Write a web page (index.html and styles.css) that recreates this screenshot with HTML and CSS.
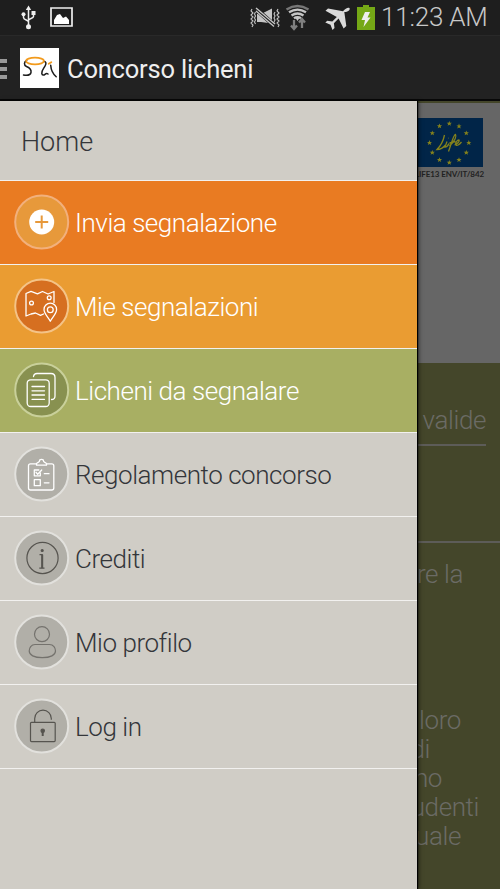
FILE: index.html
```html
<!DOCTYPE html>
<html lang="it">
<head>
<meta charset="utf-8">
<title>Concorso licheni</title>
<link rel="stylesheet" href="styles.css">
</head>
<body>
<div class="screen">
  <header class="status">
    <svg class="status-left" width="60" height="30" viewBox="0 0 60 30" fill="none" stroke="#eee" stroke-width="1.5">
      <path d="M8.5 8v18M8.5 22c0-2-5-2-5-4.500V14M8.500 20.500c0-2 5-2 5-4V13"/>
      <path d="M5.800 10L8.500 5.500 11.200 10z" fill="#eee" stroke="none"/>
      <circle cx="8.500" cy="26.800" r="2.500" fill="#eee" stroke="none"/><circle cx="3.500" cy="14.300" r="2" fill="#eee" stroke="none"/>
      <path d="M11.500 11h4v4h-4z" fill="#eee" stroke="none"/>
      <path d="M31 8h21v18H31z" stroke-width="1.700"/>
      <path d="M34 24v-4l3-5 3-1 3 4 3-1.500 3 3.500v4z" fill="#fff" stroke="none"/>
    </svg>
    <svg class="status-right" width="128" height="32" viewBox="250 0 128 32" fill="none" stroke="#c5c5c5" stroke-width="1.500">
      <path d="M252 9l-1 2 2 2-2 2 2 2-2 2 2 2-2 2 2 2-1 2M278 9l-1 2 2 2-2 2 2 2-2 2 2 2-2 2 2 2-1 2M255.500 12l-1 2 1 2-1 2 1 2-1 2 1 2M275 12l-1 2 1 2-1 2 1 2-1 2 1 2" stroke-width="1.100"/>
      <path d="M257 14h4l11-5.500v15L261 22h-4z" fill="#c5c5c5" stroke="none"/>
      <path d="M256 9l19 17" stroke="#202020" stroke-width="5"/><path d="M256 8l19 16M256 11l18 15.500" stroke-width="1.400"/>
      <path d="M286.500 9.500q11-7 22 0" stroke="#777" stroke-width="2.500"/>
      <path d="M289 12.300q8.500-5.500 17 0M291.500 15.500q6-4 12 0M294 18.300q3.500-2.500 7 0" stroke-width="2.300"/>
      <path d="M295.500 18h4l-2 3z" fill="#c5c5c5" stroke="none"/>
      <path d="M294 20v8M291 25.500l3 3.500 3-3.500M302 28v-8M299 22.500l3-3.500 3 3.500" stroke="#808080" stroke-width="2.300"/>
      <path d="M349.500 8c-2-.8-4 .5-6.500 3.200L328 8.500l-2.500 2.300 11.300 6.200-4.500 4.500-5-.8-2 1.800 5.200 2.300 2 5.200 2-2-.6-4.800 4.700-4.600 5 10 2.700-2.500-2-14C348 12 350.500 10 349.500 8z" fill="#dadada" stroke="none"/>
      <path d="M357 7h6V5h6v2h6v23h-18z" fill="#75a816" stroke="none"/>
      <path d="M365 12h5l-2.500 5.500h3L363.500 27l1.500-7h-3.500z" fill="#eee" stroke="none"/>
    </svg>
    <span class="clock">11:23 AM</span>
  </header>
  <div class="actionbar">
    <div class="bars"><i></i><i></i><i></i></div>
    <svg class="logo" width="39" height="40" viewBox="0 0 39 40" fill="none" stroke="#1c1c1c" stroke-width="1.500" stroke-linecap="round">
      <path d="M6.700 12.500C4 14 3.500 17 6.500 18.500c3 1.300 5 3.500 4.500 6-.5 2.500-3 3.200-7.500 2.500"/>
      <path d="M23.500 13.300c2.500 0 3 2 1.800 4.200-1.500 3-4 5-3.500 8 .4 2 2 1.800 3.200.8 1-.8 2-1 3-.3"/>
      <path d="M30.700 17.300c.3 4.500 2 8.500 5.500 11.500" />
      <ellipse cx="15" cy="13" rx="9" ry="3.300" stroke="#f29a1c" stroke-width="1.700"/><path d="M28.700 15.800l2.600-1.600" stroke="#f29a1c" stroke-width="1.800"/>
    </svg>
    <h1>Concorso licheni</h1>
  </div>
  <div class="body">
    <nav class="drawer">
      <a class="row home">Home</a>
      <a class="row orange"><svg class="icon" viewBox="0 0 56 56"><circle class="disc" cx="27.700" cy="28" r="26.500" fill="#e7993b" stroke="#f2b07c"/><circle cx="27.700" cy="28" r="12.500" fill="#fff"/><path d="M27.700 21.500v13M21.200 28h13" stroke="#e7993b" stroke-width="2"/></svg><span>Invia segnalazione</span></a>
      <a class="row amber"><svg class="icon light" viewBox="0 0 56 56"><circle class="disc" cx="27.700" cy="28" r="26.500" fill="#d66f20" stroke="#f4c387"/><path d="M29.500 36l-3 1.300-5-2.300-4.500 1-5 2V15.500l5-2.200 6.500 2.500 5-2.300 5.500 2.500 6-2.500v11"/><circle cx="17.500" cy="25" r="1.900"/><circle cx="35.200" cy="19.700" r="1.900"/><path d="M36.300 43.200c-2-4-6.300-7.500-6.300-11.700a6.300 6.300 0 0 1 12.600 0c0 4.200-4.300 7.700-6.300 11.700z"/><circle cx="36.300" cy="31.700" r="2.900"/></svg><span>Mie segnalazioni</span></a>
      <a class="row green"><svg class="icon light" viewBox="0 0 56 56"><circle class="disc" cx="27.700" cy="28" r="26.500" fill="#889150" stroke="#c9d09a"/><rect x="13.200" y="17.800" width="22" height="26.700" rx="3.500"/><path d="M19.500 14.500c.3-2 1.500-3 3.500-3h14c2.500 0 4 1.500 4 4V34c0 2.500-1 3.500-3.500 3.500M18 24.500h12.500M18 28.800h12.500M18 33h12.500M18 37.300h12.500"/></svg><span>Licheni da segnalare</span></a>
      <a class="row"><svg class="icon light" viewBox="0 0 56 56"><circle class="disc" cx="27.700" cy="28" r="26.500" fill="#b1afa8" stroke="#e2e1dd"/><path d="M22 17.800h-5.500c-1.500 0-2 .5-2 2V42c0 1.500.5 2 2 2h21.300c1.500 0 2-.5 2-2V19.800c0-1.500-.5-2-2-2h-5M22.500 19.200v-1.700c1-1.500 3-1 3-2.500 0-2.300 4-2.300 4 0 0 1.500 2 1 3 2.500v1.700zM26.300 27v2.800h-6V24h4.500M22 26.300l1.700 1.900 4-4.200M20.300 33.700h6v6h-6zM30.300 27.700h4.700M30.300 36.800h4.700"/></svg><span>Regolamento concorso</span></a>
      <a class="row"><svg class="icon dark" viewBox="0 0 56 56"><circle class="disc" cx="27.700" cy="28" r="26.500" fill="#b1afa8" stroke="#e2e1dd"/><circle cx="28.500" cy="28" r="15.600"/><circle cx="28.200" cy="20.500" r="1" fill="#56544f"/><path d="M25.500 24.700h2.700v13.500M25.300 38.200h5.200"/><path d="M28.200 24.700v13.500" stroke-width="2"/></svg><span>Crediti</span></a>
      <a class="row"><svg class="icon dark soft" viewBox="0 0 56 56"><circle class="disc" cx="27.700" cy="28" r="26.500" fill="#b1afa8" stroke="#e2e1dd"/><circle cx="28" cy="20.200" r="7.500"/><path d="M21 30.500h14.500c4 0 6 3.500 6 6.500 0 4-5 6.700-13.200 6.700S15.200 41 15.200 37c0-3 2-6.500 5.800-6.500z"/></svg><span>Mio profilo</span></a>
      <a class="row"><svg class="icon dark" viewBox="0 0 56 56"><circle class="disc" cx="27.700" cy="28" r="26.500" fill="#b1afa8" stroke="#e2e1dd"/><rect x="16.500" y="24.300" width="24.700" height="19.300" rx="1"/><path d="M20.700 24v-3.500a8.300 8.300 0 0 1 16.600 0v1.300"/><circle cx="28.700" cy="32.700" r="1.700" fill="#56544f"/><path d="M28.700 33v5" stroke-width="2"/></svg><span>Log in</span></a>
    </nav>
    <main class="page">
      <section class="banner">
        <svg class="flag" width="66" height="49" viewBox="417 118 66 49">
          <path d="M417 118h66v49h-66z" fill="#012548"/>
          <defs><path id="star" d="M0-2.600L.7-.8 2.600-.8 1.100.4 1.700 2.300 0 1.200-1.700 2.300-1.100.4-2.600-.8-.7-.8z" fill="#85821c"/></defs>
          <use href="#star" x="449.300" y="123.500"/><use href="#star" x="459" y="126.200"/><use href="#star" x="466.300" y="133"/><use href="#star" x="468.800" y="142.700"/><use href="#star" x="466.300" y="152.500"/><use href="#star" x="459" y="159.800"/><use href="#star" x="449.300" y="162.500"/><use href="#star" x="439.500" y="159.800"/><use href="#star" x="432.300" y="152.500"/><use href="#star" x="429.500" y="142.700"/><use href="#star" x="432.300" y="133"/><use href="#star" x="439.500" y="126"/>
          <path d="M444.500 135c-1 5-4 11-7.500 14.500 4 0 6.500-2 8.500-4.500M447 141.500l-2 5.500q2.500 0 4-3.500M448.300 138l.3.300M449.500 146c4-4 7.500-9 6-11.500-2 0-4 9-7 17M449.500 143l6-1.500M454.500 145c3-1 5.500-4 4.500-5-2 0-4 3-3 5 1 1 3 0 5.500-3" fill="none" stroke="#85821c" stroke-width="1.300"/>
        </svg>
        <div class="code">LIFE13 ENV/IT/842</div>
      </section>
      <p class="line valide">valide</p>
      <p class="line rela">re la</p>
      <div class="story">
        <p class="line p39">loro</p>
        <p class="line p70">di</p>
        <p class="line p58">no</p>
        <p class="line p21">udenti</p>
        <p class="line p39">uale</p>
      </div>
    </main>
  </div>
</div>
</body>
</html>
```
FILE: styles.css
```css
* { box-sizing: border-box; }
body { margin: 0; font-family: Roboto, "Liberation Sans", sans-serif; background: #212121; }
.screen { width: 500px; height: 889px; overflow: hidden; display: flex; flex-direction: column; }
p, h1 { margin: 0; white-space: nowrap; }
.status { height: 36px; flex: none; display: flex; background: #1e1e1e; border-bottom: 1px solid #292929; }
.status-left { margin-left: 20px; }
.status-right { margin-left: 170px; flex: none; }
.clock { margin-left: 3px; font-size: 26px; line-height: 35px; letter-spacing: -.2px; color: #c8c8c8; font-weight: 300; white-space: nowrap; }
.actionbar { height: 65px; flex: none; display: flex; align-items: center; background: #222; border-bottom: 2px solid #080808; }
.bars { width: 7px; display: grid; gap: 4px; margin: 3px 13px 0 0; }
.bars i { height: 4px; background: #999; }
.logo { background: #fff; flex: none; }
.actionbar h1 { margin: 3px 0 0 8px; font-size: 25.500px; font-weight: 400; letter-spacing: -.2px; color: #eee; }
.body { flex: 1; display: grid; grid-template-columns: 417px 83px; min-height: 0; }
.drawer { background: #d0cdc6; z-index: 1; box-shadow: 1px 0 1px #000, 2px 0 4px rgba(0,0,0,.5); }
.row { height: 84px; display: flex; align-items: center; gap: 5px; padding-left: 14px; border-bottom: 1px solid #f2f1ef; color: #34363a; font-size: 26px; font-weight: 300; white-space: nowrap; }
.row span { letter-spacing: -.45px; }
.home { height: 80px; padding: 3px 0 0 21px; font-size: 27px; }
.orange { background: #e97b22; color: #fff; }
.amber { background: #ea9c32; color: #fff; }
.green { background: #a8af63; color: #fff; }
.icon { width: 56px; height: 56px; flex: none; margin-top: -1px; fill: none; }
.icon .disc { stroke-width: 2; }
.light { stroke: #fff; stroke-width: 1.300; stroke-linejoin: round; stroke-linecap: round; }
.dark { stroke: #56544f; stroke-width: 1.200; }
.soft { stroke: #74726d; }
.page { background: #44462a; overflow: hidden; }
.banner { height: 262px; background: #666; border-top: 2px solid #44462a; padding-top: 15px; }
.flag { display: block; }
.code { display: flex; justify-content: flex-end; padding-right: 16px; margin-top: 2px; font: 700 8px/10px Lato, sans-serif; letter-spacing: -.1px; color: #222; white-space: nowrap; }
.line { display: flex; justify-content: flex-end; font-size: 26px; line-height: 29px; font-weight: 300; letter-spacing: -.4px; color: #6b6b65; }
.valide { height: 83px; margin-right: 14px; padding-top: 43px; border-bottom: 2px solid #5d5c58; }
.rela { margin-top: 95px; padding: 17px 37px 0 0; border-top: 2px solid #5d5c58; }
.story { padding-top: 117px; }
.p39 { padding-right: 39px; }
.p70 { padding-right: 70px; }
.p58 { padding-right: 58px; }
.p21 { padding-right: 21px; }
```
